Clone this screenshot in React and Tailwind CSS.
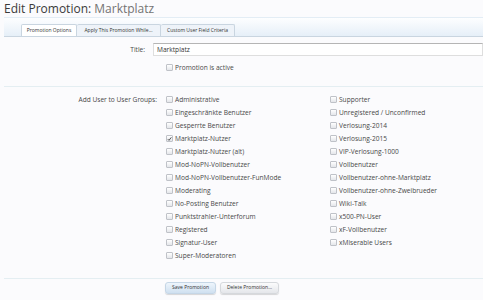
import React from "react";

const leftGroups = [
  "Administrative",
  "Eingeschränkte Benutzer",
  "Gesperrte Benutzer",
  "Marktplatz-Nutzer",
  "Marktplatz-Nutzer (alt)",
  "Mod-NoPN-Vollbenutzer",
  "Mod-NoPN-Vollbenutzer-FunMode",
  "Moderating",
  "No-Posting Benutzer",
  "Punktstrahler-Unterforum",
  "Registered",
  "Signatur-User",
  "Super-Moderatoren",
];

const rightGroups = [
  "Supporter",
  "Unregistered / Unconfirmed",
  "Verlosung-2014",
  "Verlosung-2015",
  "VIP-Verlosung-1000",
  "Vollbenutzer",
  "Vollbenutzer-ohne-Marktplatz",
  "Vollbenutzer-ohne-Zweibrueder",
  "Wiki-Talk",
  "x500-PN-User",
  "xF-Vollbenutzer",
  "xMiserable Users",
];

function Box({ checked }) {
  return (
    <span className="w-[7px] h-[7px] shrink-0 rounded-[1px] border border-[#bfc2c8] bg-gradient-to-b from-white to-[#e4e6ea] flex items-center justify-center">
      {checked && (
        <svg width="6" height="6" viewBox="0 0 6 6">
          <path d="M1 3.2 L2.4 4.6 L5.2 1" stroke="#444" strokeWidth="1.1" fill="none" />
        </svg>
      )}
    </span>
  );
}

function Check({ label, checked }) {
  return (
    <div className="h-[13px] flex items-center gap-[2px]">
      <Box checked={checked} />
      <span className="text-[6.6px] text-[#484848] whitespace-nowrap">{label}</span>
    </div>
  );
}

export default function App() {
  return (
    <div className="w-[483px] h-[300px] overflow-hidden bg-[#fbfbfd] font-['Open_Sans',sans-serif]">
      <h1 className="pl-[4px] pt-[1px] h-[17px] text-[12px] leading-[15px] text-[#3a3a3a]">
        Edit Promotion: <span className="text-[#737373]">Marktplatz</span>
      </h1>

      <div className="ml-[4px] h-[20px] border-t border-[#e3edf5] bg-gradient-to-b from-[#fdfeff] to-[#e6eff8] border-b border-b-[#c9d5e0] flex items-end pl-[17px]">
        <div className="h-[12px] px-[3px] bg-white border border-b-0 border-[#c9d5e0] rounded-t-[2px] flex items-center text-[5px] text-[#333] w-[56px] justify-center">
          Promotion Options
        </div>
        <div className="h-[12px] bg-[#eef3f9] border border-b-0 border-l-0 border-[#c9d5e0] rounded-t-[2px] flex items-center text-[5px] text-[#333] w-[84px] justify-center">
          Apply This Promotion While...
        </div>
        <div className="h-[12px] bg-[#eef3f9] border border-b-0 border-l-0 border-[#c9d5e0] rounded-t-[2px] flex items-center text-[5px] text-[#333] w-[74px] justify-center">
          Custom User Field Criteria
        </div>
      </div>

      <div className="mt-[6px] flex items-center h-[13px]">
        <div className="w-[157px] text-right text-[6.6px] text-[#484848]">Title:</div>
        <div className="ml-[8px] w-[330px] h-[13px] shrink-0 border border-t-[#b5b5b5] border-[#dedede] bg-white flex items-center pl-[3px] text-[6.6px] text-[#333]">
          Marktplatz
        </div>
      </div>

      <div className="mt-[5px] ml-[166px]">
        <Check label="Promotion is active" />
      </div>

      <div className="mt-[12px] ml-[4px] border-t border-[#e4eef2]" />

      <div className="mt-[6px] flex">
        <div className="w-[157px] h-[13px] flex items-center justify-end text-[6.6px] text-[#484848]">
          Add User to User Groups:
        </div>
        <div className="ml-[9px] w-[164px]">
          {leftGroups.map((g) => (
            <Check key={g} label={g} checked={g === "Marktplatz-Nutzer"} />
          ))}
        </div>
        <div>
          {rightGroups.map((g) => (
            <Check key={g} label={g} />
          ))}
        </div>
      </div>

      <div className="mt-[16px] ml-[4px] border-t border-[#e4eef2]" />

      <div className="mt-[3px] ml-[165px] flex gap-[4px]">
        <button className="w-[51px] h-[12px] rounded-[3px] border border-[#c5d6e6] bg-gradient-to-b from-[#eef5fc] to-[#cfe0f0] text-[5px] text-[#333] shadow-[0_1px_1px_rgba(0,0,0,0.15)]">
          Save Promotion
        </button>
        <button className="w-[59px] h-[12px] rounded-[3px] border border-[#d5d8dc] bg-gradient-to-b from-[#fbfbfc] to-[#e4e6ea] text-[5px] text-[#333] shadow-[0_1px_1px_rgba(0,0,0,0.15)]">
          Delete Promotion...
        </button>
      </div>
    </div>
  );
}
